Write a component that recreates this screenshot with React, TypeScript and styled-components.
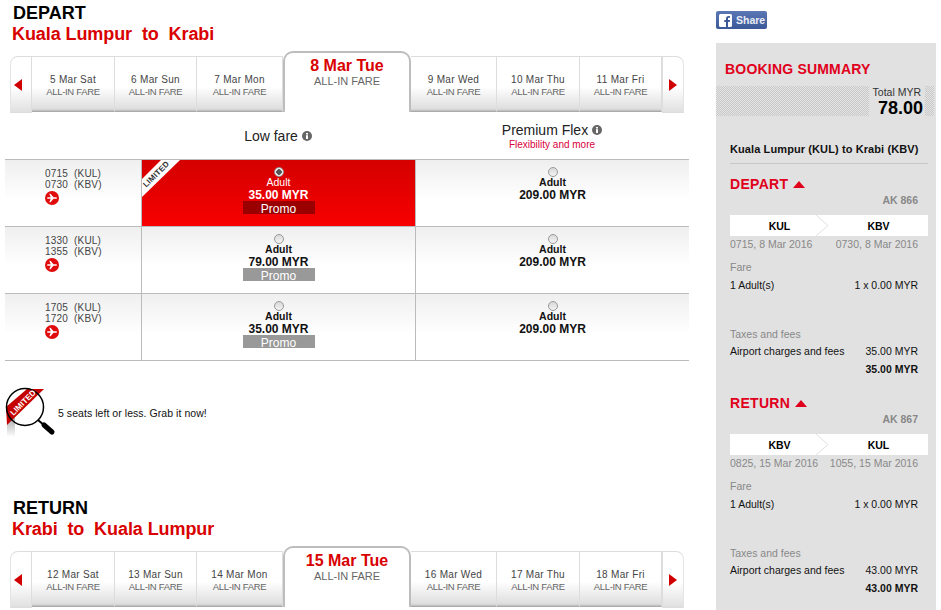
import React from "react";
import styled, { createGlobalStyle } from "styled-components";

const Global = createGlobalStyle`
  html, body { margin: 0; padding: 0; background: #fff; }
  body { width: 941px; height: 610px; overflow: hidden; font-family: "Liberation Sans", Arial, sans-serif; color: #111; }
  * { box-sizing: border-box; }
`;

const Page = styled.div`
  display: flex;
  width: 941px;
  height: 610px;
  overflow: hidden;
  align-items: flex-start;
`;
const Main = styled.main`
  width: 716px;
  flex: none;
  padding: 3px 0 0 5px;
`;
const Section = styled.section<{ $gap?: number }>`
  margin-top: ${(p) => p.$gap ?? 0}px;
`;
const Heading = styled.h2`
  margin: 0 0 0 8px;
  font-size: 18px;
  line-height: 20px;
  font-weight: 700;
  color: #000;
`;
const Route = styled.h3`
  margin: 0 0 0 7px;
  font-size: 18px;
  line-height: 22px;
  font-weight: 700;
  letter-spacing: -0.08px;
  color: #d90000;
  white-space: pre;
`;
const Strip = styled.div`
  display: flex;
  align-items: flex-end;
  height: 61px;
  margin: 6px 0 0 5px;
  width: 674px;
`;
const Arrow = styled.div<{ $side: "l" | "r" }>`
  flex: none;
  width: 22px;
  height: 57px;
  margin-bottom: -1px;
  display: flex;
  align-items: center;
  justify-content: center;
  padding-right: ${(p) => (p.$side === "l" ? 6 : 0)}px;
  background: linear-gradient(#fff 55%, #e0e0e0);
  border-top: 1px solid #ddd;
  border-radius: ${(p) => (p.$side === "l" ? "8px 0 0 0" : "0 8px 0 0")};
  border-${(p) => (p.$side === "l" ? "left" : "right")}: 1px solid #e4e4e4;
  border-${(p) => (p.$side === "l" ? "right" : "left")}: 1px solid #ddd;
  border-bottom: 1px solid #ddd;
  &::after {
    content: "";
    border-style: solid;
    border-width: 6px 0 6px 8px;
    border-color: transparent transparent transparent #d00000;
    transform: ${(p) => (p.$side === "l" ? "scaleX(-1)" : "none")};
  }
`;
const DayTab = styled.div<{ $w: number }>`
  flex: none;
  width: ${(p) => p.$w}px;
  height: 56px;
  padding-top: 17px;
  text-align: center;
  background: linear-gradient(#fff 55%, #dedede 96%, #bbb);
  border-top: 1px solid #ddd;
  border-right: 1px solid #ddd;
  border-bottom: 1px solid #aaa;
`;
const DayLabel = styled.div`
  font-size: 10px;
  line-height: 12px;
  letter-spacing: 0.3px;
  color: #444;
  white-space: nowrap;
`;
const FareLabel = styled.div`
  font-size: 9.5px;
  line-height: 11px;
  letter-spacing: -0.3px;
  color: #666;
  white-space: nowrap;
`;
const ActiveTab = styled.div`
  flex: none;
  width: 128px;
  height: 61px;
  padding-top: 4px;
  text-align: center;
  background: #fff;
  border: 2px solid #bdbdbd;
  border-bottom: 0;
  border-radius: 10px 10px 0 0;
`;
const ActiveDay = styled.div`
  font-size: 16px;
  line-height: 18px;
  font-weight: 700;
  color: #d90000;
`;
const ActiveFare = styled.div`
  font-size: 11px;
  line-height: 13px;
  color: #666;
`;
const FareHead = styled.div`
  display: grid;
  grid-template-columns: 136px 274px 274px;
  height: 47px;
  width: 684px;
`;
const FareCol = styled.div`
  text-align: center;
  padding-top: 10px;
`;
const FareName = styled.div<{ $center?: boolean }>`
  display: flex;
  justify-content: center;
  align-items: center;
  gap: 4px;
  font-size: 14px;
  line-height: 16px;
  color: #222;
  margin-top: ${(p) => (p.$center ? 6 : 0)}px;
`;
const FareNote = styled.div`
  font-size: 10px;
  line-height: 13px;
  color: #d9003c;
`;
const Table = styled.div`
  width: 684px;
  border-bottom: 1px solid #bbb;
`;
const Row = styled.div`
  display: grid;
  grid-template-columns: 136px 274px 274px;
  height: 67px;
  border-top: 1px solid #bbb;
`;
const TimeCell = styled.div`
  padding: 8px 0 0 40px;
  font-size: 10px;
  line-height: 11px;
  letter-spacing: 0.2px;
  color: #444;
  background: linear-gradient(#efefef, #fff 60%);
  white-space: pre;
`;
const PlaneWrap = styled.div`
  height: 14px;
  margin-top: 1px;
`;
const FareCell = styled.div<{ $sel?: boolean }>`
  position: relative;
  text-align: center;
  border-left: 1px solid #bbb;
  padding-top: 7px;
  background: ${(p) => (p.$sel ? "linear-gradient(#d40000, #f80000)" : "linear-gradient(#efefef, #fff 60%)")};
  color: ${(p) => (p.$sel ? "#fff" : "#111")};
  overflow: hidden;
`;
const Radio = styled.div<{ $on?: boolean }>`
  width: 10px;
  height: 10px;
  margin: 0 auto;
  border-radius: 50%;
  border: 1px solid #999;
  background: ${(p) =>
    p.$on ? "radial-gradient(circle, #555 0 2.5px, #f0f0f0 3px)" : "linear-gradient(#d8d8d8, #f4f4f4)"};
`;
const Pax = styled.div<{ $sel?: boolean }>`
  margin-top: -1px;
  font-size: 10.5px;
  line-height: 12px;
  font-weight: ${(p) => (p.$sel ? 400 : 700)};
`;
const Price = styled.div`
  font-size: 12px;
  line-height: 14px;
  font-weight: 700;
`;
const Promo = styled.div<{ $sel?: boolean }>`
  width: 72px;
  height: 13px;
  margin: -1px auto 0;
  font-size: 12px;
  line-height: 16px;
  color: #fff;
  background: ${(p) => (p.$sel ? "#9b0000" : "#999")};
`;
const Ribbon = styled.svg`
  position: absolute;
  left: 0;
  top: 0;
`;
const Notice = styled.div`
  display: flex;
  align-items: center;
  height: 52px;
  margin-top: 26px;
  font-size: 10.5px;
  letter-spacing: 0.05px;
  color: #111;
  gap: 1px;
`;
const Side = styled.aside`
  width: 220px;
  flex: none;
  padding-top: 11px;
`;
const Share = styled.div`
  display: flex;
  align-items: center;
  width: 51px;
  height: 18px;
  padding-left: 3px;
  gap: 4px;
  border-radius: 2px;
  background: linear-gradient(#5b78b4, #3b5998);
  color: #e8edf6;
  font-size: 10.5px;
  font-weight: 700;
`;
const Panel = styled.div`
  margin-top: 14px;
  height: 567px;
  background: #e1e1e1;
  padding-top: 18px;
`;
const PanelTitle = styled.div`
  margin-left: 9px;
  font-size: 14px;
  line-height: 16px;
  font-weight: 700;
  letter-spacing: 0.2px;
  color: #e0001b;
`;
const TotalBand = styled.div`
  display: flex;
  justify-content: flex-end;
  width: 218px;
  height: 30px;
  margin-top: 9px;
  background-color: #d6d6d6;
  background-image: repeating-conic-gradient(#c8c8c8 0 25%, #e4e4e4 0 50%);
  background-size: 2px 2px;
`;
const TotalBox = styled.div`
  width: 56px;
  margin-right: 9px;
  background: #e1e1e1;
  text-align: right;
  padding-right: 2px;
`;
const TotalLabel = styled.div`
  margin-right: 2px;
  font-size: 10.5px;
  line-height: 13px;
  color: #333;
`;
const TotalValue = styled.div`
  font-size: 18px;
  line-height: 18px;
  font-weight: 700;
  color: #000;
`;
const RouteLine = styled.div`
  margin: 27px 8px 0 14px;
  padding-bottom: 7px;
  border-bottom: 1px solid #c8c8c8;
  font-size: 11px;
  line-height: 13px;
  font-weight: 700;
  letter-spacing: 0.1px;
  color: #111;
`;
const Block = styled.div<{ $gap: number }>`
  margin: ${(p) => p.$gap}px 8px 0 14px;
`;
const BlockTitle = styled.div`
  display: flex;
  align-items: center;
  gap: 5px;
  font-size: 14px;
  line-height: 16px;
  font-weight: 700;
  letter-spacing: 0.3px;
  color: #e0001b;
  &::after {
    content: "";
    border-style: solid;
    border-width: 0 6px 7px 6px;
    border-color: transparent transparent #e0001b transparent;
  }
`;
const Flight = styled.div`
  margin: 1px 10px 0 0;
  text-align: right;
  font-size: 10.5px;
  line-height: 14px;
  font-weight: 700;
  color: #888;
`;
const Leg = styled.div`
  position: relative;
  display: grid;
  grid-template-columns: 1fr 1fr;
  height: 21px;
  margin-top: 8px;
  background: #fff;
  text-align: center;
  font-size: 10.5px;
  line-height: 22px;
  font-weight: 700;
  color: #000;
`;
const Chevron = styled.svg`
  position: absolute;
  left: 86px;
  top: 0;
`;
const Line = styled.div<{ $gap?: number; $muted?: boolean; $bold?: boolean }>`
  display: flex;
  justify-content: space-between;
  margin: ${(p) => p.$gap ?? 0}px 10px 0 0;
  font-size: 10.5px;
  line-height: 13px;
  font-weight: ${(p) => (p.$bold ? 700 : 400)};
  color: ${(p) => (p.$muted ? "#888" : "#111")};
  white-space: nowrap;
`;
const Label = styled.span``;

const Info = () => (
  <svg width="10" height="10" viewBox="0 0 10 10">
    <circle cx="5" cy="5" r="5" fill="#666" />
    <rect x="4" y="4.2" width="2" height="3.8" fill="#fff" />
    <rect x="4" y="2" width="2" height="1.5" fill="#fff" />
  </svg>
);
const Plane = () => (
  <svg width="14" height="14" viewBox="0 0 14 14">
    <circle cx="7" cy="7" r="7" fill="#e00b0b" />
    <path
      d="M2.5 6.200h3.200L4.300 2.800h1.200l3 3.400h2.300c.8 0 1.200.4 1.200.8s-.4.8-1.200.8H8.500l-3 3.400H4.300l1.400-3.400H2.500L2 7z"
      fill="#fff"
    />
  </svg>
);
const Corner = () => (
  <Ribbon width="40" height="38" viewBox="0 0 40 38">
    <polygon points="0,19 19,0 38,0 0,37" fill="#fff" />
    <text
      x="4.300"
      y="27.800"
      transform="rotate(-45 4.300 27.800)"
      fontFamily="Liberation Sans, Arial, sans-serif"
      fontSize="8"
      fontWeight="700"
      fill="#333"
      textLength="33"
    >
      LIMITED
    </text>
  </Ribbon>
);
const Magnifier = () => (
  <svg width="52" height="52" viewBox="0 0 52 52">
    <defs>
      <linearGradient id="shadow" x1="0" y1="0" x2="0" y2="1">
        <stop offset="0" stopColor="#aaa" />
        <stop offset="1" stopColor="#fff" />
      </linearGradient>
    </defs>
    <polygon points="2,37 10,30 10,50 2,50" fill="url(#shadow)" />
    <polygon points="22,2 39,2 2,38 1,20" fill="#c40000" />
    <circle cx="20" cy="20" r="18.500" fill="none" stroke="#000" strokeWidth="1.500" />
    <text
      x="8.500"
      y="29"
      transform="rotate(-45 8.500 29)"
      fontFamily="Liberation Sans, Arial, sans-serif"
      fontSize="8"
      fontWeight="700"
      fill="#fff"
    >
      LIMITED
    </text>
    <path d="M33 33 L40 39" stroke="#000" strokeWidth="2" />
    <path d="M39 38 L47 45" stroke="#000" strokeWidth="5" strokeLinecap="round" />
  </svg>
);
const FbLogo = () => (
  <svg width="13" height="13" viewBox="0 0 13 13">
    <rect width="13" height="13" rx="1.500" fill="#fff" />
    <path d="M9 13V8h1.700l.3-2H9V4.800c0-.6.2-1 1-1h1V2.100C10.800 2 10.200 2 9.600 2 8 2 7 3 7 4.600V6H5.300v2H7v5z" fill="#3b5998" />
  </svg>
);

type RowData = { dep: string; arr: string; from: string; to: string; low: string; sel?: boolean };

const beforeWidths = [83, 82, 86];
const afterWidths = [86, 83, 82];

const Tabs = ({ before, active, after }: { before: string[]; active: string; after: string[] }) => (
  <Strip>
    <Arrow $side="l" />
    {before.map((d, i) => (
      <DayTab key={d} $w={beforeWidths[i]}>
        <DayLabel>{d}</DayLabel>
        <FareLabel>ALL-IN FARE</FareLabel>
      </DayTab>
    ))}
    <ActiveTab>
      <ActiveDay>{active}</ActiveDay>
      <ActiveFare>ALL-IN FARE</ActiveFare>
    </ActiveTab>
    {after.map((d, i) => (
      <DayTab key={d} $w={afterWidths[i]}>
        <DayLabel>{d}</DayLabel>
        <FareLabel>ALL-IN FARE</FareLabel>
      </DayTab>
    ))}
    <Arrow $side="r" />
  </Strip>
);

const rows: RowData[] = [
  { dep: "0715", arr: "0730", from: "KUL", to: "KBV", low: "35.00 MYR", sel: true },
  { dep: "1330", arr: "1355", from: "KUL", to: "KBV", low: "79.00 MYR" },
  { dep: "1705", arr: "1720", from: "KUL", to: "KBV", low: "35.00 MYR" },
];

const Summary = (p: {
  title: string;
  gap: number;
  flight: string;
  a: string;
  b: string;
  ta: string;
  tb: string;
  tax: string;
}) => (
  <Block $gap={p.gap}>
    <BlockTitle>{p.title}</BlockTitle>
    <Flight>{p.flight}</Flight>
    <Leg>
      <Label>{p.a}</Label>
      <Label>{p.b}</Label>
      <Chevron width="14" height="21" viewBox="0 0 14 21">
        <path d="M0 0 L12 10.500 L0 21" fill="#fff" stroke="#e1e1e1" strokeWidth="1" />
      </Chevron>
    </Leg>
    <Line $gap={2} $muted>
      <Label>{p.ta}</Label>
      <Label>{p.tb}</Label>
    </Line>
    <Line $gap={10} $muted>
      <Label>Fare</Label>
    </Line>
    <Line $gap={5}>
      <Label>1 Adult(s)</Label>
      <Label>1 x 0.00 MYR</Label>
    </Line>
    <Line $gap={36} $muted>
      <Label>Taxes and fees</Label>
    </Line>
    <Line $gap={4}>
      <Label>Airport charges and fees</Label>
      <Label>{p.tax}</Label>
    </Line>
    <Line $gap={5} $bold>
      <span />
      <Label>{p.tax}</Label>
    </Line>
  </Block>
);

export default function App() {
  return (
    <Page>
      <Global />
      <Main>
        <Section>
          <Heading>DEPART</Heading>
          <Route>{"Kuala Lumpur  to  Krabi"}</Route>
          <Tabs
            before={["5 Mar Sat", "6 Mar Sun", "7 Mar Mon"]}
            active="8 Mar Tue"
            after={["9 Mar Wed", "10 Mar Thu", "11 Mar Fri"]}
          />
          <FareHead>
            <span />
            <FareCol>
              <FareName $center>
                Low fare <Info />
              </FareName>
            </FareCol>
            <FareCol>
              <FareName>
                Premium Flex <Info />
              </FareName>
              <FareNote>Flexibility and more</FareNote>
            </FareCol>
          </FareHead>
          <Table>
            {rows.map((r) => (
              <Row key={r.dep}>
                <TimeCell>
                  {`${r.dep}  (${r.from})\n${r.arr}  (${r.to})`}
                  <PlaneWrap>
                    <Plane />
                  </PlaneWrap>
                </TimeCell>
                <FareCell $sel={r.sel}>
                  {r.sel && <Corner />}
                  <Radio $on={r.sel} />
                  <Pax $sel={r.sel}>Adult</Pax>
                  <Price>{r.low}</Price>
                  <Promo $sel={r.sel}>Promo</Promo>
                </FareCell>
                <FareCell>
                  <Radio />
                  <Pax>Adult</Pax>
                  <Price>209.00 MYR</Price>
                </FareCell>
              </Row>
            ))}
          </Table>
          <Notice>
            <Magnifier />
            5 seats left or less. Grab it now!
          </Notice>
        </Section>
        <Section $gap={59}>
          <Heading>RETURN</Heading>
          <Route>{"Krabi  to  Kuala Lumpur"}</Route>
          <Tabs
            before={["12 Mar Sat", "13 Mar Sun", "14 Mar Mon"]}
            active="15 Mar Tue"
            after={["16 Mar Wed", "17 Mar Thu", "18 Mar Fri"]}
          />
        </Section>
      </Main>
      <Side>
        <Share>
          <FbLogo />
          Share
        </Share>
        <Panel>
          <PanelTitle>BOOKING SUMMARY</PanelTitle>
          <TotalBand>
            <TotalBox>
              <TotalLabel>Total MYR</TotalLabel>
              <TotalValue>78.00</TotalValue>
            </TotalBox>
          </TotalBand>
          <RouteLine>Kuala Lumpur (KUL) to Krabi (KBV)</RouteLine>
          <Summary
            title="DEPART"
            gap={12}
            flight="AK 866"
            a="KUL"
            b="KBV"
            ta="0715, 8 Mar 2016"
            tb="0730, 8 Mar 2016"
            tax="35.00 MYR"
          />
          <Summary
            title="RETURN"
            gap={19}
            flight="AK 867"
            a="KBV"
            b="KUL"
            ta="0825, 15 Mar 2016"
            tb="1055, 15 Mar 2016"
            tax="43.00 MYR"
          />
        </Panel>
      </Side>
    </Page>
  );
}
